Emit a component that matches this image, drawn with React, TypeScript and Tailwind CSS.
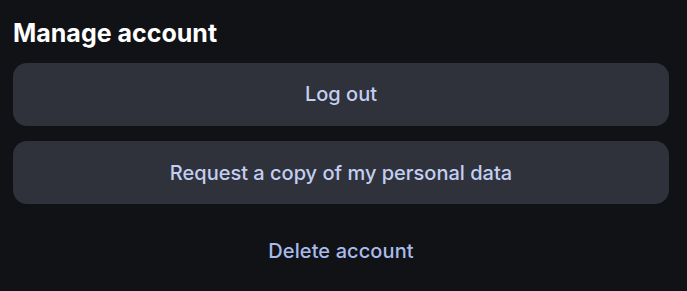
import React from 'react';

const App: React.FC = () => {
  return (
    <div className="min-h-[291px] w-full bg-[#111216] px-[13px] pt-[16px] font-['Inter',sans-serif]">
      <h2 className="text-[25px] font-bold leading-[34px] text-white">Manage account</h2>
      <div className="mt-[13px] flex w-[656px] flex-col gap-[15px]">
        <button className="h-[63px] w-full rounded-[14px] bg-[#2f323a] pb-[1px] text-[20px] font-medium text-[#c3cff2]">
          Log out
        </button>
        <button className="h-[63px] w-full rounded-[14px] bg-[#2f323a] text-[20px] font-medium text-[#c3cff2]">
          Request a copy of my personal data
        </button>
        <button className="mt-[14px] h-[36px] w-full text-[20px] font-medium tracking-[0.1px] text-[#a9bbec]">
          Delete account
        </button>
      </div>
    </div>
  );
};

export default App;
